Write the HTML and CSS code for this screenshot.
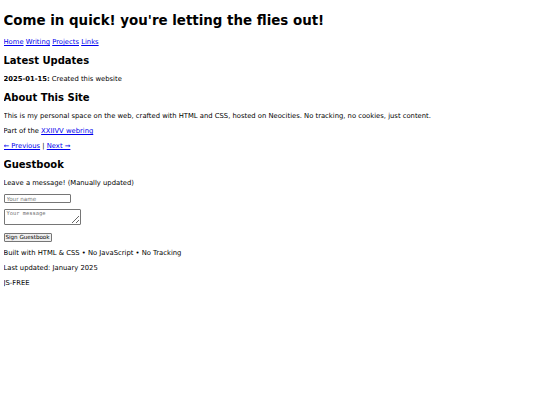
FILE: index.html
```
<!DOCTYPE html>
<html lang="en">
<head>
<meta charset="utf-8">
<title>Come in quick!</title>
<link rel="stylesheet" href="styles.css">
</head>
<body>
<header>
<h1>Come in quick! you're letting the flies out!</h1>
<nav class="nav"><a href="#">Home</a> <a href="#">Writing</a> <a href="#">Projects</a> <a href="#">Links</a></nav>
</header>
<main>
<section>
<h2>Latest Updates</h2>
<p><strong>2025-01-15:</strong> Created this website</p>
</section>
<section>
<h2>About This Site</h2>
<p>This is my personal space on the web, crafted with HTML and CSS, hosted on Neocities. No tracking, no cookies, just content.</p>
<p>Part of the <a href="#">XXIIVV webring</a></p>
<p><a href="#">← Previous</a> | <a href="#">Next →</a></p>
</section>
<section>
<h2>Guestbook</h2>
<p>Leave a message! (Manually updated)</p>
<form class="form">
<div class="row"><input class="field name-field" type="text" placeholder="Your name"></div>
<div class="row"><textarea class="field msg-field" placeholder="Your message"></textarea></div>
<div class="row row-btn"><button class="btn" type="button">Sign Guestbook</button></div>
</form>
</section>
</main>
<footer>
<p>Built with HTML &amp; CSS • No JavaScript • No Tracking</p>
<p>Last updated: January 2025</p>
<p>JS-FREE</p>
</footer>
</body>
</html>
```
FILE: styles.css
```
body {
  margin: 3.5px;
  font-family: "DejaVu Sans", sans-serif;
  font-size: 6.8px;
  line-height: 8.01px;
  color: #000;
  background: #fff;
}
h1 {
  font-size: 13.4px;
  line-height: 16.02px;
  margin: 9.22px 0;
}
h2 {
  font-size: 10px;
  line-height: 12.01px;
  margin: 8.57px 0;
}
p {
  margin: 6.88px 0;
}
a {
  color: #0000ee;
}
.form {
  margin: 6.88px 0;
}
.row + .row {
  margin-top: 5.5px;
}
.row.row-btn {
  margin-top: 8.6px;
}
.field {
  display: block;
  box-sizing: border-box;
  border: 1px solid #767676;
  border-radius: 1px;
  background: #fff;
  font-family: "DejaVu Sans", sans-serif;
  font-size: 5.6px;
  line-height: 1;
  padding: 0 2px;
  margin: 0;
}
.name-field {
  width: 67px;
  height: 9px;
}
.msg-field {
  width: 77px;
  height: 16px;
  font-family: "DejaVu Sans Mono", monospace;
  font-size: 5.4px;
  padding: 1px 2px;
  resize: both;
}
.field::placeholder {
  color: #757575;
}
.btn {
  display: block;
  box-sizing: border-box;
  width: 48px;
  height: 8.7px;
  margin: 0;
  padding: 0;
  border: 1px solid #767676;
  border-radius: 1px;
  background: #efefef;
  font-family: "DejaVu Sans", sans-serif;
  font-size: 5.6px;
  line-height: 1;
  color: #000;
}
```
